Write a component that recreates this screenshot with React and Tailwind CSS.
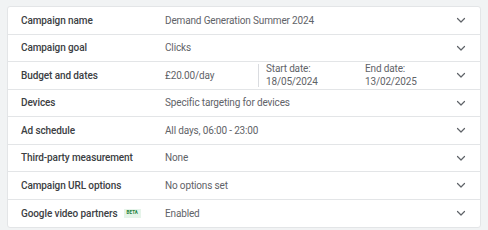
const rows = [
  { label: 'Campaign name', value: 'Demand Generation Summer 2024' },
  { label: 'Campaign goal', value: 'Clicks' },
  { label: 'Budget and dates', budget: true },
  { label: 'Devices', value: 'Specific targeting for devices' },
  { label: 'Ad schedule', value: 'All days, 06:00 - 23:00' },
  { label: 'Third-party measurement', value: 'None' },
  { label: 'Campaign URL options', value: 'No options set' },
  { label: 'Google video partners', value: 'Enabled', beta: true },
]

function Chevron() {
  return (
    <svg width="12" height="12" viewBox="0 0 12 12" className="shrink-0">
      <path d="M2.5 4.5 L6 8 L9.5 4.5" fill="none" stroke="#5f6368" strokeWidth="1.2" strokeLinecap="round" strokeLinejoin="round" />
    </svg>
  )
}

function Row({ row, last }) {
  return (
    <div className={`flex items-center h-[27.5px] pl-[13px] pr-[13px] ${last ? '' : 'border-b border-[#e3e5e7]'}`}>
      <div className="w-[144px] flex items-center gap-[6px] text-[10px] tracking-[-0.1px] font-medium text-[#3c4043]">
        <span>{row.label}</span>
        {row.beta && (
          <span className="text-[4.5px] font-bold leading-none px-[3px] py-[2px] bg-[#e6f4ea] text-[#188038] tracking-wide">BETA</span>
        )}
      </div>
      {row.budget ? (
        <div className="flex-1 flex items-center text-[10px] tracking-[-0.15px] text-[#5f6368] h-full">
          <span className="w-[93px]">£20.00/day</span>
          <div className="flex h-full py-[2px]">
            <div className="w-px bg-[#dadce0]" />
          </div>
          <div className="w-[106px] pl-[7px] leading-[13px]">
            <div>Start date:</div>
            <div>18/05/2024</div>
          </div>
          <div className="leading-[13px]">
            <div>End date:</div>
            <div>13/02/2025</div>
          </div>
        </div>
      ) : (
        <div className="flex-1 text-[10px] tracking-[-0.15px] text-[#5f6368]">{row.value}</div>
      )}
      <Chevron />
    </div>
  )
}

export default function App() {
  return (
    <div className="w-[488px] h-[230px] bg-[#f1f3f4] pt-[6px] pl-[7px]" style={{ fontFamily: 'Roboto, "Noto Sans", sans-serif' }}>
      <div className="w-[474px] bg-white border border-[#e3e5e7] rounded-[3px] overflow-hidden">
        {rows.map((r, i) => (
          <Row key={r.label} row={r} last={i === rows.length - 1} />
        ))}
      </div>
    </div>
  )
}
